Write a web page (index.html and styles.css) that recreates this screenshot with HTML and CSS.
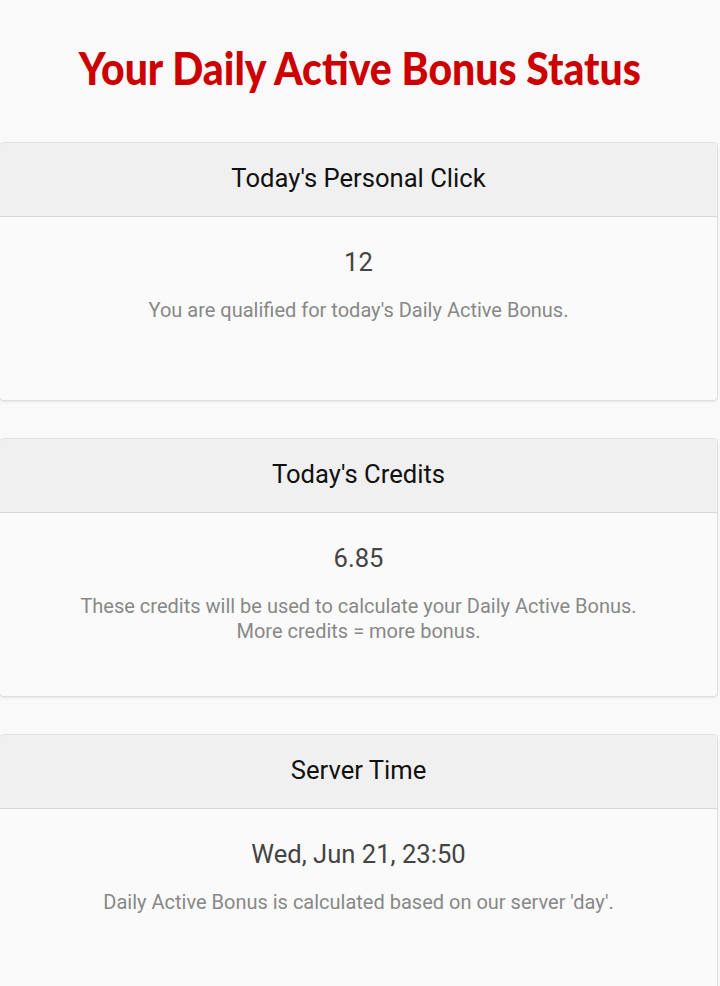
FILE: index.html
```html
<!DOCTYPE html>
<html lang="en">
<head>
<meta charset="utf-8">
<title>Daily Active Bonus Status</title>
<link rel="stylesheet" href="styles.css">
</head>
<body>
<main class="page">
  <h1 class="title"><span class="title-text">Your Daily Active Bonus Status</span></h1>

  <section class="card">
    <header class="card-header">Today's Personal Click</header>
    <div class="card-body">
      <div class="value">12</div>
      <p class="note">You are qualified for today's Daily Active Bonus.</p>
    </div>
  </section>

  <section class="card">
    <header class="card-header">Today's Credits</header>
    <div class="card-body">
      <div class="value">6.85</div>
      <p class="note">These credits will be used to calculate your Daily Active Bonus.<br>More credits = more bonus.</p>
    </div>
  </section>

  <section class="card">
    <header class="card-header">Server Time</header>
    <div class="card-body">
      <div class="value">Wed, Jun 21, 23:50</div>
      <p class="note">Daily Active Bonus is calculated based on our server 'day'.</p>
    </div>
  </section>
</main>
</body>
</html>
```

FILE: styles.css
```css
html, body {
  margin: 0;
  padding: 0;
  background: #f9f9f9;
}
body {
  font-family: Roboto, "Liberation Sans", sans-serif;
  overflow: hidden;
}
.page {
  display: flex;
  flex-direction: column;
  gap: 37px;
  padding-top: 43px;
}
.title {
  margin: 0 0 12px;
  text-align: center;
  color: #cc0000;
  font-family: Lato, "Liberation Sans", sans-serif;
  font-weight: 900;
  font-size: 46px;
  line-height: 50px;
}
.title-text {
  display: inline-block;
  transform: scaleX(0.89);
  transform-origin: center;
  white-space: nowrap;
}
.card {
  margin: 0 2px 0 -1px;
  background: #fafafa;
  border: 1px solid rgba(0, 0, 0, 0.1);
  border-radius: 5px;
  box-shadow: 0 1px 2px rgba(0, 0, 0, 0.08);
  overflow: hidden;
}
.card-header {
  background: #f0f0f0;
  border-bottom: 1px solid rgba(0, 0, 0, 0.1);
  height: 74px;
  box-sizing: border-box;
  padding-bottom: 3px;
  display: flex;
  align-items: center;
  justify-content: center;
  font-size: 25.6px;
  color: #111;
}
.card-body {
  min-height: 153px;
  padding: 30px 16px 0;
  text-align: center;
}
.value {
  font-size: 25.6px;
  line-height: 30px;
  color: #444;
}
.note {
  margin: 21px 0 0;
  font-size: 20px;
  line-height: 25px;
  color: #888;
}
```
